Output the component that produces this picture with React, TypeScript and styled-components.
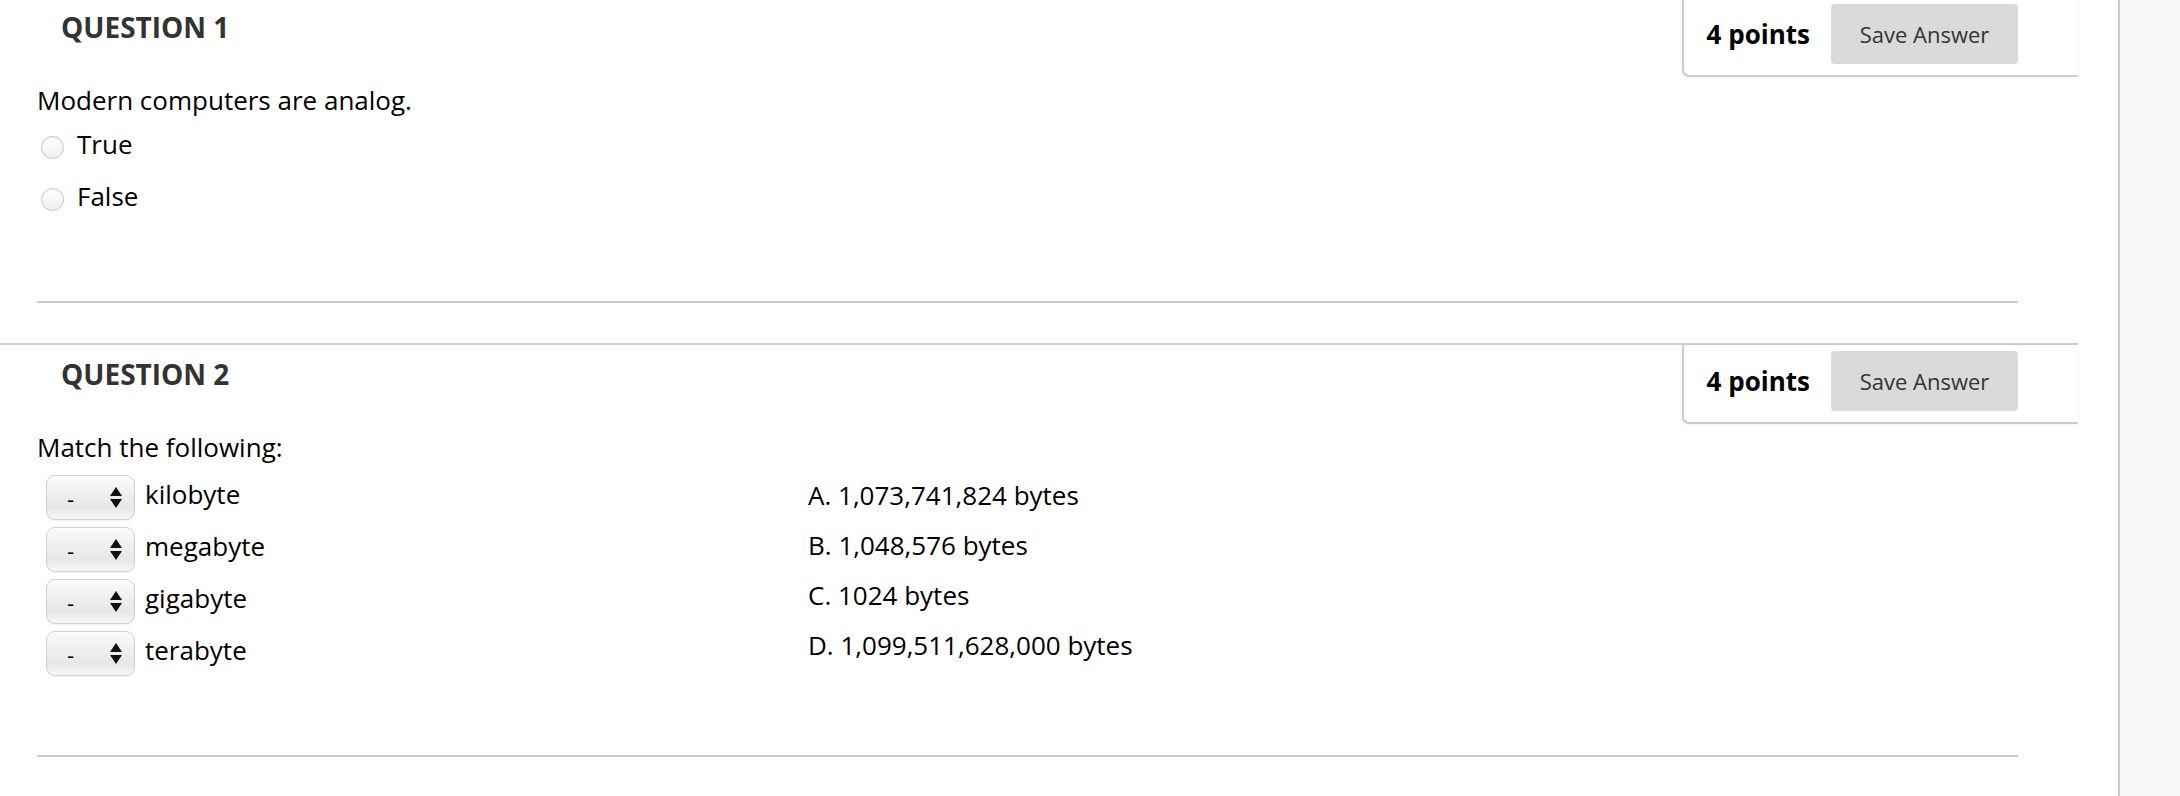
import React from "react";
import styled, { createGlobalStyle } from "styled-components";

const GlobalStyle = createGlobalStyle`
  html, body {
    margin: 0;
    padding: 0;
    background: #ffffff;
  }
  body {
    font-family: "Open Sans", "Noto Sans", sans-serif;
    color: #000000;
    overflow: hidden;
  }
`;

const Page = styled.div`
  display: flex;
  height: 796px;
  overflow: hidden;
`;

const Main = styled.main`
  width: 2118px;
  flex: none;
`;

const SidePanel = styled.aside`
  flex: 1;
  background: #f7f7f7;
  border-left: 2px solid #cccccc;
`;

const QuestionList = styled.div`
  width: 2078px;
  margin-top: -4px;
`;

const Question = styled.section`
  border-top: 2px solid #cccccc;
`;

const Header = styled.header`
  display: flex;
  justify-content: space-between;
  align-items: flex-start;
  padding-left: 61px;
`;

const Heading = styled.h2`
  margin: 0;
  padding-top: 10px;
  font-size: 28px;
  line-height: 38px;
  font-weight: 700;
  color: #333333;
`;

const PointsBox = styled.div`
  display: flex;
  align-items: center;
  gap: 21px;
  padding: 6px 60px 11px 23px;
  border-left: 2px solid #cccccc;
  border-bottom: 2px solid #cccccc;
  border-bottom-left-radius: 7px;
  box-shadow: 0 1px 3px rgba(0, 0, 0, 0.06);
  background: #ffffff;
`;

const Points = styled.span`
  font-size: 26px;
  font-weight: 700;
  color: #000000;
  line-height: 36px;
`;

const SaveButton = styled.button`
  width: 187px;
  height: 60px;
  border: none;
  border-radius: 4px;
  background: #dadada;
  color: #333333;
  font-family: "Open Sans", "Noto Sans", sans-serif;
  font-size: 22px;
  padding: 0;
  cursor: pointer;
`;

const Body = styled.div`
  padding: 0 60px 40px 37px;
`;

const Prompt = styled.p`
  margin: 5px 0 0;
  font-size: 26px;
  line-height: 36px;
`;

const ChoiceList = styled.div`
  display: flex;
  flex-direction: column;
`;

const ChoiceRow = styled.label`
  display: flex;
  align-items: center;
  height: 52px;
  gap: 13px;
  font-size: 26px;
  line-height: 36px;
`;

const RadioDot = styled.span`
  width: 23px;
  height: 23px;
  box-sizing: border-box;
  margin: 6px 0 0 4px;
  border-radius: 50%;
  border: 1px solid #c4c4c4;
  background: linear-gradient(#ffffff, #efefef);
  box-shadow: inset 0 1px 1px rgba(0, 0, 0, 0.05);
`;

const MatchGrid = styled.div`
  display: flex;
  margin-top: 3px;
`;

const SelectColumn = styled.div`
  width: 771px;
  display: flex;
  flex-direction: column;
`;

const SelectRow = styled.div`
  display: flex;
  align-items: center;
  height: 52px;
  gap: 10px;
  font-size: 26px;
  line-height: 36px;
`;

const Dropdown = styled.div`
  width: 89px;
  height: 45px;
  box-sizing: border-box;
  margin: 7px 0 0 9px;
  padding: 0 12px 0 20px;
  display: flex;
  align-items: center;
  justify-content: space-between;
  border: 1px solid #d0d0d0;
  border-radius: 9px;
  background: linear-gradient(#fbfbfb 0%, #eeeeee 45%, #e8e8e8 75%, #f7f7f7 100%);
  box-shadow: inset 0 1px 0 #ffffff, 0 1px 1px rgba(0, 0, 0, 0.05);
  font-size: 22px;
  color: #000000;
`;

const OptionColumn = styled.ol`
  list-style: none;
  margin: 2px 0 0;
  padding: 0;
  font-size: 26px;
  line-height: 50px;
`;

const Divider = styled.hr`
  height: 2px;
  border: none;
  margin: 79px 0 0;
  background: #cccccc;
`;

const Arrows = () => (
  <svg width="12" height="21" viewBox="0 0 12 21" aria-hidden="true">
    <path d="M6 0 L12 9 L0 9 Z" fill="#111" />
    <path d="M0 12 L12 12 L6 21 Z" fill="#111" />
  </svg>
);

const terms = ["kilobyte", "megabyte", "gigabyte", "terabyte"];
const answers = [
  "A. 1,073,741,824 bytes",
  "B. 1,048,576 bytes",
  "C. 1024 bytes",
  "D. 1,099,511,628,000 bytes",
];

const QuestionHeader = ({ title }: { title: string }) => (
  <Header>
    <Heading>{title}</Heading>
    <PointsBox>
      <Points>4 points</Points>
      <SaveButton type="button">Save Answer</SaveButton>
    </PointsBox>
  </Header>
);

export default function App() {
  return (
    <>
      <GlobalStyle />
      <Page>
        <Main>
          <QuestionList>
            <Question>
              <QuestionHeader title="QUESTION 1" />
              <Body>
                <Prompt>Modern computers are analog.</Prompt>
                <ChoiceList>
                  <ChoiceRow>
                    <RadioDot />
                    True
                  </ChoiceRow>
                  <ChoiceRow>
                    <RadioDot />
                    False
                  </ChoiceRow>
                </ChoiceList>
                <Divider />
              </Body>
            </Question>
            <Question>
              <QuestionHeader title="QUESTION 2" />
              <Body>
                <Prompt>Match the following:</Prompt>
                <MatchGrid>
                  <SelectColumn>
                    {terms.map((t) => (
                      <SelectRow key={t}>
                        <Dropdown role="combobox">
                          <span>-</span>
                          <Arrows />
                        </Dropdown>
                        {t}
                      </SelectRow>
                    ))}
                  </SelectColumn>
                  <OptionColumn>
                    {answers.map((a) => (
                      <li key={a}>{a}</li>
                    ))}
                  </OptionColumn>
                </MatchGrid>
                <Divider />
              </Body>
            </Question>
          </QuestionList>
        </Main>
        <SidePanel />
      </Page>
    </>
  );
}
